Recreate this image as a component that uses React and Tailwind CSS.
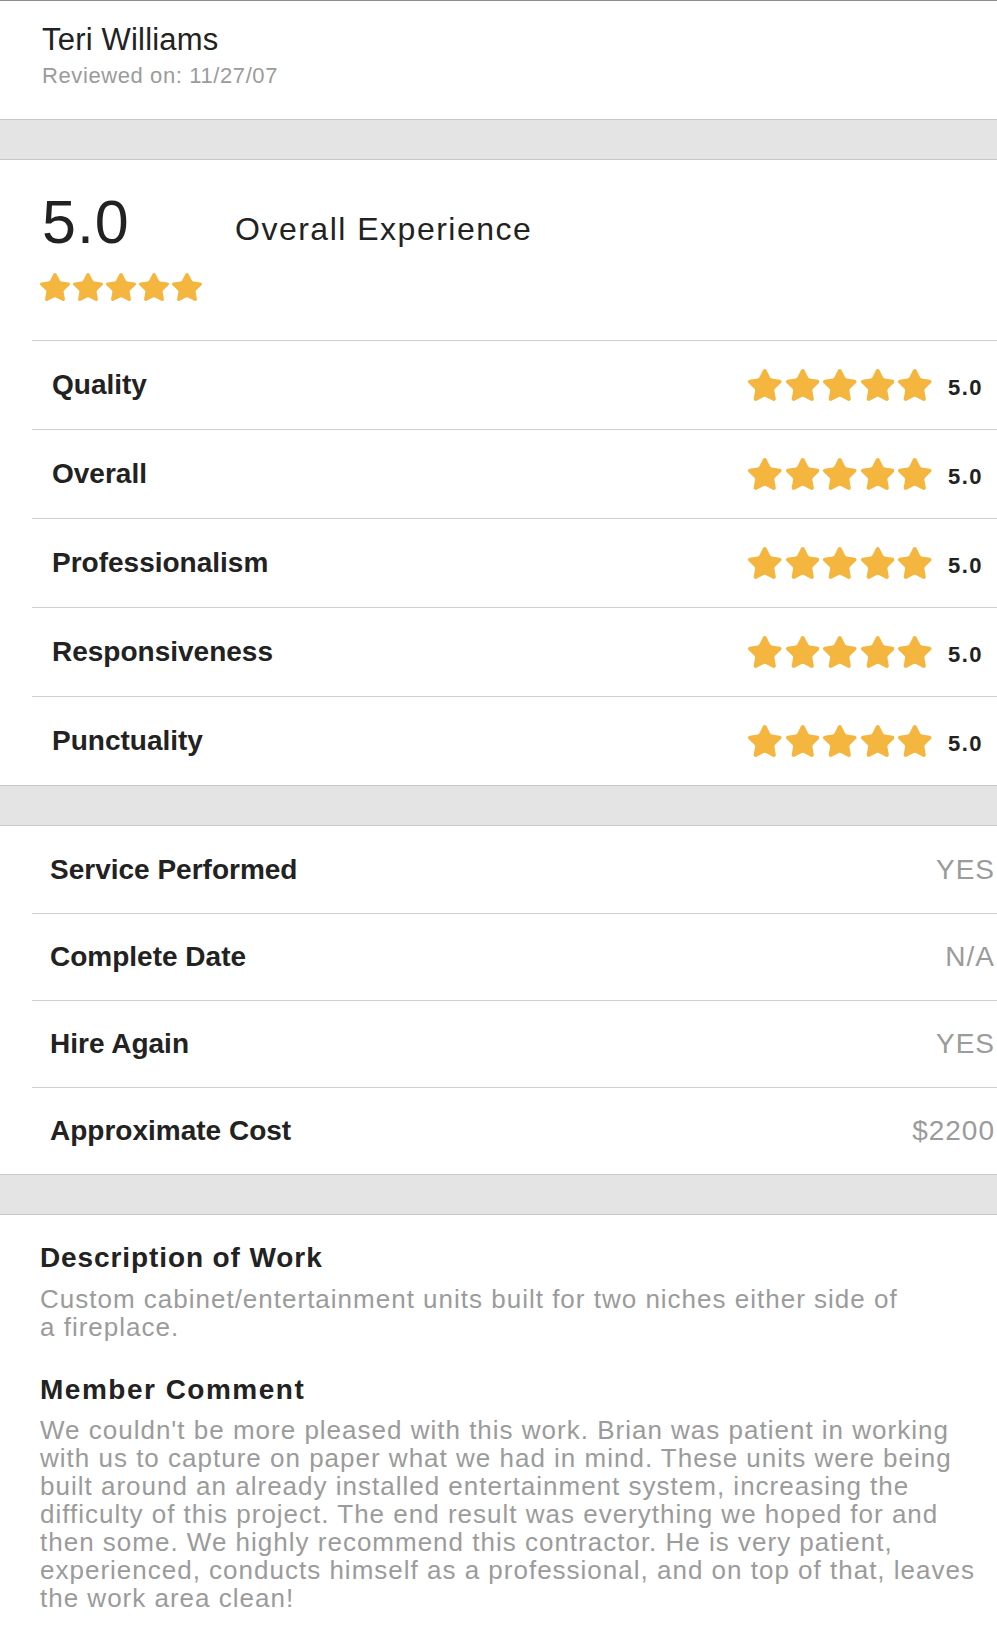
const STAR_PATH =
  'M11.525 2.295a.53.53 0 0 1 .95 0l2.31 4.679a2.123 2.123 0 0 0 1.595 1.16l5.166.756a.53.53 0 0 1 .294.904l-3.736 3.638a2.123 2.123 0 0 0-.611 1.878l.882 5.14a.53.53 0 0 1-.771.56l-4.618-2.428a2.122 2.122 0 0 0-1.973 0L6.396 21.01a.53.53 0 0 1-.77-.56l.881-5.139a2.122 2.122 0 0 0-.611-1.879L2.16 9.795a.53.53 0 0 1 .294-.906l5.165-.755a2.122 2.122 0 0 0 1.597-1.16z';

function Star({ className }) {
  return (
    <svg viewBox="1.3 1.3 21.4 20.5" preserveAspectRatio="none" className={className}>
      <path d={STAR_PATH} fill="#F4B63F" stroke="#F4B63F" strokeWidth="1.4" strokeLinejoin="round" />
    </svg>
  );
}

function Stars({ size = 'sm' }) {
  const big = size === 'lg';
  return (
    <div className={big ? 'flex items-center gap-[4px]' : 'flex items-center gap-[3px]'}>
      {[1, 2, 3, 4, 5].map(i => (
        <Star key={i} className={big ? 'w-[33.5px] h-[32px]' : 'w-[30px] h-[28px]'} />
      ))}
    </div>
  );
}

function Band() {
  return <div className="h-[41px] bg-[#e4e4e4] border-y border-[#c8c8c8]" />;
}

const ratings = ['Quality', 'Overall', 'Professionalism', 'Responsiveness', 'Punctuality'];

const details = [
  { label: 'Service Performed', value: 'YES' },
  { label: 'Complete Date', value: 'N/A' },
  { label: 'Hire Again', value: 'YES' },
  { label: 'Approximate Cost', value: '$2200' },
];

export default function App() {
  return (
    <div className="w-full min-h-[1630px] bg-white text-[#222222] font-['Liberation_Sans',Arial,sans-serif]">
      {/* reviewer */}
      <div className="border-t border-[#8c8c8c] pl-[42px] pt-[21px] pb-[29px]">
        <p className="text-[31px] leading-[36px] tracking-[0.2px]">Teri Williams</p>
        <p className="mt-[4px] text-[22px] leading-[28px] tracking-[0.6px] text-[#9b9b9b]">
          Reviewed on: 11/27/07
        </p>
      </div>

      <Band />

      {/* ratings */}
      <div className="pl-[32px]">
        <div className="flex items-start pl-[8px] pt-[32px] pb-[39px]">
          <div className="w-[195px]">
            <p className="pl-[2px] text-[61px] leading-[61px] tracking-[1px]">5.0</p>
            <div className="mt-[20px]">
              <Stars />
            </div>
          </div>
          <p className="mt-[18px] text-[32px] leading-[38px] tracking-[1.5px] text-[#222222]">
            Overall Experience
          </p>
        </div>

        {ratings.map(name => (
          <div
            key={name}
            className="flex items-center justify-between h-[89px] border-t border-[#cfcfcf] pl-[20px] pr-[14px]"
          >
            <span className="text-[28px] leading-[34px] font-bold">{name}</span>
            <div className="flex items-center">
              <Stars size="lg" />
              <span className="ml-[16px] mt-[6px] text-[22px] leading-[22px] font-bold tracking-[1.5px]">5.0</span>
            </div>
          </div>
        ))}
      </div>

      <Band />

      {/* job details */}
      <div className="pl-[32px]">
        {details.map((d, i) => (
          <div
            key={d.label}
            className={
              i === 0
                ? 'flex items-center justify-between h-[87px] pl-[18px] pr-[2px]'
                : 'flex items-center justify-between h-[87px] border-t border-[#cfcfcf] pl-[18px] pr-[2px]'
            }
          >
            <span className="text-[28px] leading-[34px] font-bold">{d.label}</span>
            <span className="text-[28px] leading-[34px] tracking-[1px] text-[#9b9b9b]">{d.value}</span>
          </div>
        ))}
      </div>

      <Band />

      {/* description + comment */}
      <div className="pl-[40px] pr-[7px] pt-[27px] pb-[19px]">
        <h3 className="text-[28px] leading-[32px] font-bold tracking-[0.9px]">Description of Work</h3>
        <p className="mt-[11px] max-w-[880px] text-[26px] leading-[28px] tracking-[1px] text-[#9b9b9b]">
          Custom cabinet/entertainment units built for two niches either side of a fireplace.
        </p>

        <h3 className="mt-[33px] text-[28px] leading-[32px] font-bold tracking-[1.5px]">Member Comment</h3>
        <p className="mt-[10px] text-[26px] leading-[28px] tracking-[1px] text-[#9b9b9b]">
          We couldn't be more pleased with this work. Brian was patient in working with us to capture on paper
          what we had in mind. These units were being built around an already installed entertainment system,
          increasing the difficulty of this project. The end result was everything we hoped for and then some.
          We highly recommend this contractor. He is very patient, experienced, conducts himself as a
          professional, and on top of that, leaves the work area clean!
        </p>
      </div>
    </div>
  );
}
